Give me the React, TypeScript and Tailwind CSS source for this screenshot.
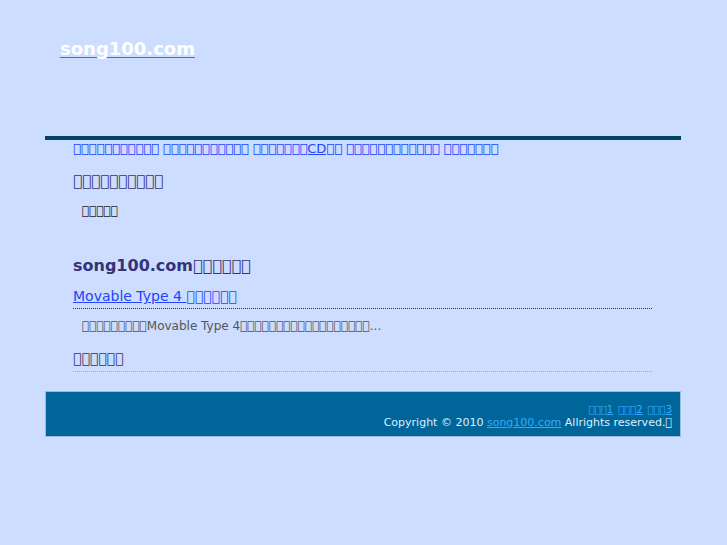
const T = (n: number) => '\uE000'.repeat(n);

const navItems = [T(11), T(11), `${T(7)}CD${T(2)}`, T(12), T(7)];

const App = () => {
  return (
    <div className="min-h-[545px] w-full bg-[#ccddff] font-['DejaVu_Sans',sans-serif]">
      <div className="pt-[38px] pl-[60px] h-[136px] text-[18px] leading-[22px]">
        <a href="#" className="font-bold text-white underline decoration-[#4466ff] decoration-1 underline-offset-2">
          song100.com
        </a>
      </div>

      <div className="mx-[45px] w-[636px]">
        <div className="h-[4px] bg-[#004466]" />

        <div className="px-[28px]">
          <div className="flex gap-[4px] pt-[1px] text-[13px] leading-[16px] text-[#2244ff]">
            {navItems.map((n, i) => (
              <a key={i} href="#" className="underline">
                {n}
              </a>
            ))}
          </div>

          <h2 className="mt-[15px] text-[15px] leading-[18px] text-[#333377]">{T(10)}</h2>
          <p className="mt-[14px] pl-[9px] text-[12px] leading-[15px] text-[#222222]">{T(5)}</p>

          <h2 className="mt-[37px] text-[16px] font-bold leading-[20px] text-[#333377]">
            song100.com{T(6)}
          </h2>

          <div className="mt-[12px] pb-[3px] border-b border-dotted border-[#333344] w-[579px] text-[14px] leading-[17px]">
            <a href="#" className="text-[#2244ff] underline">
              Movable Type 4 {T(6)}
            </a>
          </div>
          <p className="mt-[10px] pl-[9px] text-[12px] leading-[15px] text-[#555555]">
            {T(9)}Movable Type 4{T(18)}...
          </p>

          <div className="mt-[16px] pb-[4px] border-b border-dotted border-[#99aacc] w-[579px]">
            <h3 className="text-[14px] leading-[17px] text-[#333366]">{T(6)}</h3>
          </div>
        </div>

        <div className="mt-[19px] h-[46px] bg-[#006699] border border-[#99bbdd] flex flex-col items-end pr-[8px] pt-[12px]">
          <div className="flex gap-[5px] text-[10px] leading-[12px] text-[#33aaff]">
            <a href="#" className="underline">{T(3)}1</a>
            <a href="#" className="underline">{T(3)}2</a>
            <a href="#" className="underline">{T(3)}3</a>
          </div>
          <p className="text-[11px] leading-[14px] text-[#ddeeff]">
            Copyright © 2010{' '}
            <a href="#" className="text-[#33aaff] underline">
              song100.com
            </a>{' '}
            Allrights reserved.{T(1)}
          </p>
        </div>
      </div>
    </div>
  );
};

export default App;
